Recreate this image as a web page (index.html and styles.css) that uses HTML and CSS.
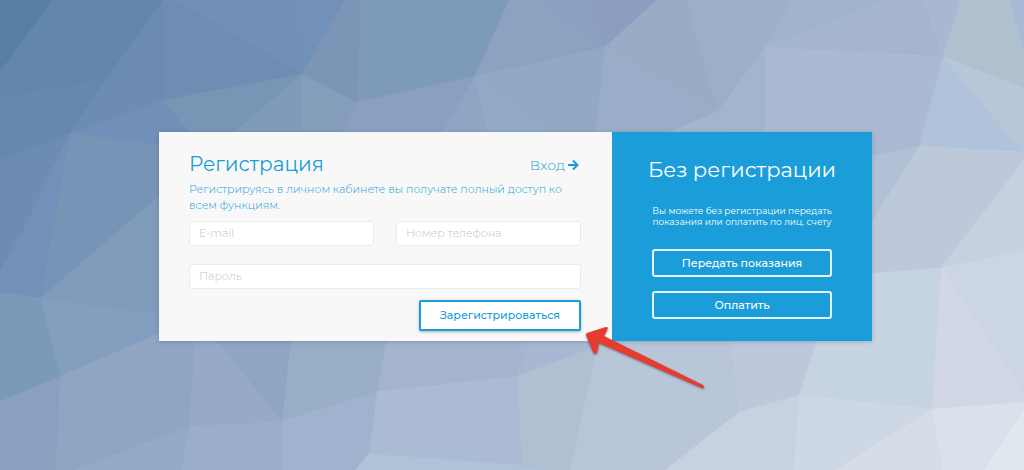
FILE: index.html
```
<!DOCTYPE html>
<html lang="ru">
<head>
    <meta charset="UTF-8">
    <meta name="viewport" content="width=device-width, initial-scale=1">
    <title>Регистрация</title>
    <link rel="stylesheet" href="styles.css">
</head>
<body>
    <svg class="backdrop" viewBox="0 0 1024 470" preserveAspectRatio="xMidYMid slice" aria-hidden="true">
        <defs>
            <linearGradient id="base" gradientUnits="userSpaceOnUse" x1="100" y1="0" x2="900" y2="470">
                <stop offset="0" stop-color="#6485ad"/>
                <stop offset="0.5" stop-color="#96aac7"/>
                <stop offset="1" stop-color="#d6dde9"/>
            </linearGradient>
        </defs>
        <rect width="1024" height="470" fill="url(#base)"/>
        <!-- left edge -->
        <polygon fill="#567fa3" points="0,0 52,0 0,72"/>
        <polygon fill="#6386ad" points="52,0 163,0 107,78 0,98 0,72"/>
        <polygon fill="#6588ae" points="0,98 107,78 70,133 0,160"/>
        <polygon fill="#6c8bb3" points="163,0 163,100 107,78"/>
        <polygon fill="#6d8cb3" points="107,78 163,100 70,133"/>
        <polygon fill="#7090b7" points="70,133 163,100 192,135 163,145"/>
        <polygon fill="#6c8cb3" points="0,160 70,133 20,235 0,271"/>
        <polygon fill="#7191b9" points="70,133 40,298 0,292 0,271 20,235"/>
        <polygon fill="#7694b5" points="70,133 163,145 170,186 40,298"/>
        <polygon fill="#809cba" points="40,298 170,186 170,315"/>
        <polygon fill="#7b99b8" points="0,292 40,298 60,376 0,401"/>
        <polygon fill="#839ebf" points="40,298 170,315 170,328 60,376"/>
        <polygon fill="#8b9fc1" points="0,401 60,376 55,470 0,470"/>
        <polygon fill="#90a5c2" points="60,376 170,328 195,330 189,426 73,470 55,470"/>
        <polygon fill="#95a9c8" points="73,470 189,426 181,470"/>
        <!-- top -->
        <polygon fill="#6e8db3" points="163,0 295,0 302,74 163,100"/>
        <polygon fill="#7190b6" points="176,0 295,0 302,74"/>
        <polygon fill="#7291b8" points="295,0 345,0 302,74"/>
        <polygon fill="#7c95b7" points="345,0 361,0 357,102 302,74"/>
        <polygon fill="#7795b5" points="163,100 302,74 225,140 192,135"/>
        <polygon fill="#7f9bb9" points="302,74 302,140 225,140"/>
        <polygon fill="#839dbb" points="302,74 357,102 337,140 302,140"/>
        <polygon fill="#7e9ab9" points="361,0 509,0 475,76 357,102"/>
        <polygon fill="#8a9fc1" points="357,102 475,76 438,140 337,140"/>
        <polygon fill="#8da1c0" points="509,0 543,0 605,47 475,76"/>
        <polygon fill="#8b9fc0" points="543,0 590,0 605,47"/>
        <polygon fill="#8c9dc0" points="590,0 657,0 605,47"/>
        <polygon fill="#90a5c3" points="475,76 438,140 489,140"/>
        <polygon fill="#93a9c8" points="475,76 489,140 562,140"/>
        <polygon fill="#93a8c5" points="475,76 605,47 595,140 562,140"/>
        <polygon fill="#98adc5" points="657,0 686,0 718,111 605,47"/>
        <polygon fill="#99adc8" points="605,47 718,111 670,132 650,140 595,140"/>
        <polygon fill="#9bafc7" points="686,0 765,47 718,111"/>
        <polygon fill="#9cb0ca" points="686,0 793,0 765,47"/>
        <polygon fill="#a2b3ce" points="793,0 889,0 765,47"/>
        <polygon fill="#a5b5cf" points="889,0 924,0 943,57 765,47"/>
        <polygon fill="#a8b8d2" points="924,0 961,0 943,57"/>
        <polygon fill="#a3b4ce" points="765,47 765,140 730,140 718,111"/>
        <polygon fill="#a3b5cc" points="718,111 730,140 650,140"/>
        <!-- right edge -->
        <polygon fill="#afc0ce" points="961,0 1009,0 1024,50 1024,88 943,57"/>
        <polygon fill="#a8b9d3" points="1009,0 1024,0 1024,50"/>
        <polygon fill="#abb9d3" points="765,47 943,57 920,146 885,120"/>
        <polygon fill="#a9b9d2" points="765,47 885,120 920,146 860,160 765,140"/>
        <polygon fill="#b9c6d7" points="943,57 1024,88 1024,152"/>
        <polygon fill="#b1c3db" points="943,57 1024,152 920,146"/>
        <polygon fill="#b1c1d5" points="860,158 920,146 860,240"/>
        <polygon fill="#bdc8da" points="920,146 1024,152 1024,160 941,268 860,274 860,240"/>
        <polygon fill="#c6d1df" points="1024,160 1024,251 941,268"/>
        <polygon fill="#ccd6e2" points="941,268 1024,251 1024,393"/>
        <polygon fill="#d2d7e5" points="941,268 1024,393 1024,402 932,409"/>
        <polygon fill="#c6d3e0" points="860,274 941,268 932,409 799,395 820,330 860,330"/>
        <!-- bottom -->
        <polygon fill="#96aac7" points="195,330 209,330 282,421 189,426"/>
        <polygon fill="#90a5c4" points="209,330 292,330 282,421"/>
        <polygon fill="#9baec9" points="189,426 282,421 281,470 181,470"/>
        <polygon fill="#98aec7" points="292,330 388,330 377,391 282,421"/>
        <polygon fill="#a1b2ce" points="282,421 377,391 369,453 355,470 281,470"/>
        <polygon fill="#a3b4cc" points="388,330 514,330 517,376 377,391"/>
        <polygon fill="#a4b4d1" points="514,330 535,330 517,376"/>
        <polygon fill="#a8b8d2" points="535,330 620,330 597,346 517,376"/>
        <polygon fill="#acbbd4" points="377,391 517,376 522,465 369,453"/>
        <polygon fill="#b0c2d8" points="369,453 522,465 540,470 355,470"/>
        <polygon fill="#b0c0d3" points="517,376 597,346 570,470 540,470 522,465"/>
        <polygon fill="#b8c5d8" points="597,346 685,470 570,470"/>
        <polygon fill="#b9c6d7" points="597,346 620,330 730,330 739,412 665,470 685,470"/>
        <polygon fill="#bdc9db" points="730,330 820,330 799,395 739,412"/>
        <polygon fill="#c6d2df" points="739,412 799,395 794,470 665,470"/>
        <polygon fill="#ced8e4" points="799,395 932,409 836,470 794,470"/>
        <polygon fill="#d7dde8" points="932,409 943,470 836,470"/>
        <polygon fill="#dae1eb" points="932,409 1024,402 1024,410 984,470 943,470"/>
        <polygon fill="#e0e7ef" points="1024,410 1024,470 984,470"/>
    </svg>

    <main class="page">
        <div class="card">
            <form class="signup">
                <div class="signup-head">
                    <h1>Регистрация</h1>
                    <a class="login-link" href="#login">Вход<svg viewBox="0 0 12 12" aria-hidden="true"><path d="M1 6h9.5M6 1.5 10.5 6 6 10.5"/></svg></a>
                </div>
                <p class="lead">Регистрируясь в личном кабинете вы получате полный доступ ко всем функциям.</p>
                <div class="fields">
                    <input type="email" name="email" placeholder="E-mail" aria-label="E-mail">
                    <input type="tel" name="phone" placeholder="Номер телефона" aria-label="Номер телефона">
                    <input class="wide" type="password" name="password" placeholder="Пароль" aria-label="Пароль">
                </div>
                <button class="submit" type="submit">Зарегистрироваться</button>
            </form>

            <section class="guest">
                <h2>Без регистрации</h2>
                <p>Вы можете без регистрации передать показания или оплатить по лиц. счету</p>
                <button type="button">Передать показания</button>
                <button type="button">Оплатить</button>
            </section>

            <svg class="pointer" viewBox="0 0 124 66" aria-hidden="true">
                <path d="M1 7 20 1Q23 1 21 4L18 10 117 59Q120 62 116 62L13 17 11 27Q9 29 7 26L0 9Q0 8 1 7Z"/>
            </svg>
        </div>
    </main>
</body>
</html>
```
FILE: styles.css
```
* { box-sizing: border-box; }
body { margin: 0; font-family: Montserrat, Inter, "Open Sans", sans-serif; color: #1b9dd9; background: #96aac7; }
h1, h2, p { margin: 0; font-weight: 400; }
input, button { font-family: inherit; }

.backdrop { position: fixed; top: 0; left: 0; width: 100%; height: 100%; z-index: -1; }

.page { display: flex; align-items: center; justify-content: center; min-height: 100vh; padding: 2px 0 0 7px; }
.card { position: relative; display: flex; width: 100%; max-width: 713px; box-shadow: 0 1px 4px rgba(40, 60, 90, 0.25); }

.signup { flex: 1; padding: 20px 31px 10px 30px; background: #f8f8f8; }
.signup-head { display: flex; align-items: center; justify-content: space-between; padding-right: 2px; }
h1 { font-size: 20px; line-height: 24px; }
.login-link { display: flex; align-items: center; gap: 2px; margin-top: 3px; font-size: 14px; font-weight: 300; line-height: 20px; color: inherit; text-decoration: none; }
.login-link svg { width: 12px; height: 12px; fill: none; stroke: #1b9dd9; stroke-width: 2; }
.lead { margin-top: 5px; padding-right: 16px; font-size: 11px; font-weight: 300; line-height: 16px; }

.fields { display: grid; grid-template-columns: 1fr 1fr; gap: 18px 22px; margin-top: 8px; }
.fields input { width: 100%; height: 25px; padding: 0 9px; border: 1px solid #ebebeb; border-radius: 3px; background: #fff; font-size: 11px; color: #555; }
.fields input::placeholder { color: #c4c4c4; font-weight: 300; }
.wide { grid-column: 1 / -1; }

.submit { display: block; width: 162px; height: 31px; margin: 11px 0 0 auto; padding: 0; border: 2px solid #1b9dd9; border-radius: 2px; background: #fff; box-shadow: 0 1px 3px rgba(0, 0, 0, 0.3); color: #1b9dd9; font-size: 11px; font-weight: 500; }

.guest { width: 260px; padding: 24px 35px 21px; background: #1b9dd9; color: #fff; text-align: center; }
h2 { font-size: 21px; line-height: 28px; white-space: nowrap; }
.guest p { margin: 21px 0 22px; font-size: 9px; line-height: 11px; }
.guest button { display: block; width: 180px; height: 28px; margin: 0 auto; padding: 0; border: 2px solid #e4f4fb; border-radius: 3px; background: none; color: #fff; font-size: 11px; font-weight: 500; }
.guest button + button { margin-top: 14px; }

.pointer { position: absolute; top: 194px; left: 427px; width: 124px; height: 66px; fill: #e63b2e; filter: drop-shadow(0 1px 1px rgba(60, 60, 80, 0.6)); }
```
